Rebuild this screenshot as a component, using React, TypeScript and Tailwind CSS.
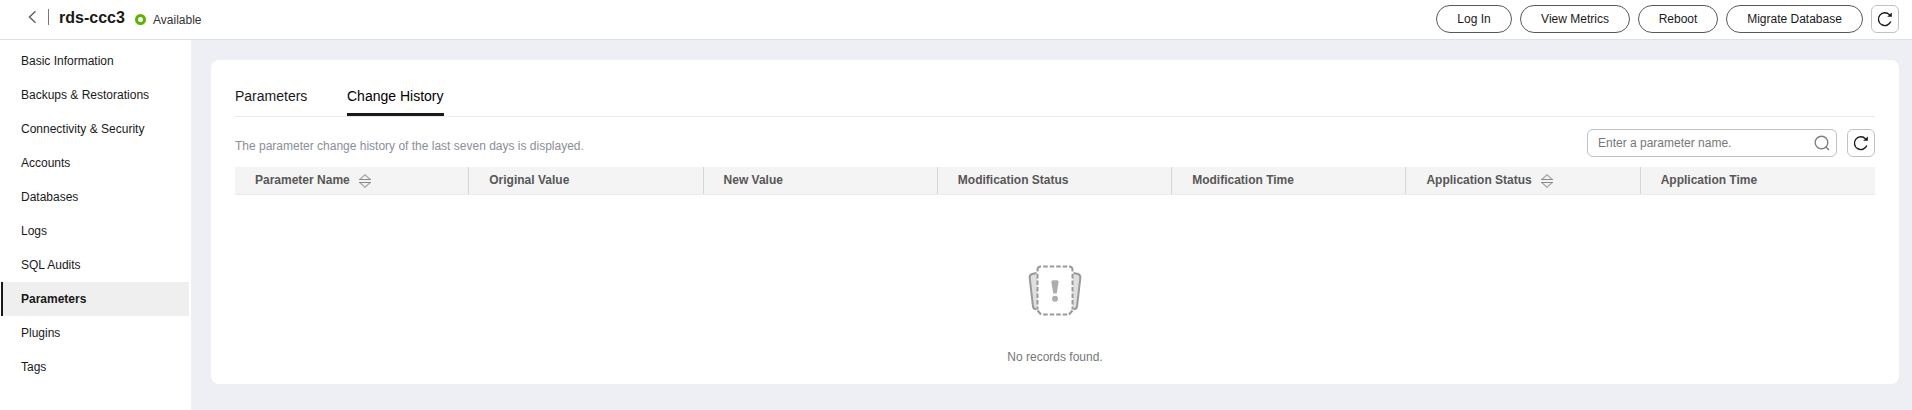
import type { ReactNode } from "react";

const navItems = [
  "Basic Information",
  "Backups & Restorations",
  "Connectivity & Security",
  "Accounts",
  "Databases",
  "Logs",
  "SQL Audits",
  "Parameters",
  "Plugins",
  "Tags",
];

const columns = [
  { label: "Parameter Name", sortable: true },
  { label: "Original Value" },
  { label: "New Value" },
  { label: "Modification Status" },
  { label: "Modification Time" },
  { label: "Application Status", sortable: true },
  { label: "Application Time" },
];

function RefreshIcon() {
  return (
    <svg width="16" height="16" viewBox="0 0 16 16" fill="none">
      <path d="M13.8 10.6A6.4 6.4 0 1 1 12.6 3.9" stroke="#191919" strokeWidth="1.4" />
      <path d="M14.8 1.400V5.800H10.200Z" fill="#191919" />
    </svg>
  );
}

function SortIcon() {
  return (
    <svg className="mt-px" width="12" height="14" viewBox="0 0 12 14" fill="none">
      <path d="M0.800 5.500L6 0.800L11.200 5.500" stroke="#adadad" strokeWidth="1.400" />
      <path d="M0.800 8.500L6 13.200L11.200 8.500" stroke="#adadad" strokeWidth="1.400" />
      <path d="M0 5.500H12M0 8.500H12" stroke="#8a8a8a" />
    </svg>
  );
}

function EmptyIcon() {
  return (
    <svg width="54" height="52" viewBox="0 0 54 52" fill="none">
      <path d="M10 8L4 9.500Q1.500 10.500 1.800 13L5 41Q5.500 43.800 8 43.800H10Z" fill="#dfdfdf" />
      <path d="M44 8L50 9.500Q52.500 10.500 52.200 13L49 41Q48.500 43.800 46 43.800H44Z" fill="#dfdfdf" />
      <path d="M8.500 8L4 9Q1.400 9.800 1.700 12.800L5 41.500Q5.500 44.200 8.500 44.200" stroke="#999" strokeWidth="2" />
      <path d="M45.500 8L50 9Q52.600 9.800 52.300 12.800L49 41.500Q48.500 44.200 45.500 44.200" stroke="#999" strokeWidth="2" />
      <path d="M13 1.500H41L44.500 5V45L41 49.500H13L9.500 45V5Z" fill="white" />
      <path d="M9.500 6.500V4.500Q9.700 1.500 13 1.500M41 1.500Q44.300 1.500 44.500 4.500V6.500M9.500 45.500L13 49.500M44.500 45.500L41 49.500" stroke="#999" strokeWidth="2" />
      <path d="M15.200 1.500H39.500M15.200 49.500H39.500" stroke="#999" strokeWidth="2" strokeDasharray="4.500 2" />
      <path d="M9.500 9V44.500M44.500 9V44.500" stroke="#999" strokeWidth="2" strokeDasharray="4.500 2" />
      <path d="M23.300 17Q23.300 15.300 25 15.300H29Q30.700 15.300 30.600 17L28.700 28.500H25.300Z" fill="#adadad" />
      <circle cx="27" cy="33.700" r="3" fill="#adadad" />
    </svg>
  );
}

function PillButton({ children, width }: { children: ReactNode; width: string }) {
  return (
    <button className={`h-7 rounded-full border border-[#595959] pb-px text-[#191919] ${width}`}>
      {children}
    </button>
  );
}

function RefreshButton() {
  return (
    <button aria-label="Refresh" className="flex size-7 shrink-0 items-center justify-center rounded-md border border-[#c2c2c2]">
      <RefreshIcon />
    </button>
  );
}

export default function App() {
  return (
    <div className="flex h-[410px] w-[1912px] flex-col overflow-hidden bg-white font-['Liberation_Sans',Arial,sans-serif] text-xs text-[#191919]">
      <header className="flex h-10 shrink-0 items-start justify-between border-b border-[#dfe1e6] pr-[13px]">
        <div className="flex items-start pl-7">
          <svg className="mt-[10px]" width="9" height="14" viewBox="0 0 9 14" fill="none" stroke="#575d6c" strokeWidth="1.400">
            <path d="M7.500 1.300L1.500 7L7.500 12.700" />
          </svg>
          <span className="mt-[9px] ml-[11px] h-4 w-px bg-[#777]" />
          <h1 className="mt-2 ml-[10px] w-[66px] text-base leading-5 font-bold whitespace-nowrap">rds-ccc3</h1>
          <span className="mt-[14px] ml-[10px] size-[11px] rounded-full border-[3px] border-[#5cb300]" />
          <span className="mt-[11px] ml-[7px] leading-[18px] text-[#333]">Available</span>
        </div>
        <div className="flex gap-2 pt-[5px]">
          <PillButton width="w-[76px]">Log In</PillButton>
          <PillButton width="w-[110px]">View Metrics</PillButton>
          <PillButton width="w-20">Reboot</PillButton>
          <PillButton width="w-[137px]">Migrate Database</PillButton>
          <RefreshButton />
        </div>
      </header>

      <div className="flex min-h-0 flex-1">
        <nav className="w-[191px] shrink-0 pt-1 pr-[2px] pl-px">
          {navItems.map((item) => (
            <a
              key={item}
              className={
                item === "Parameters"
                  ? "flex h-[34px] items-center border-l-2 border-[#191919] bg-[#efefef] pl-[18px] font-bold"
                  : "flex h-[34px] items-center border-l-2 border-transparent pl-[18px]"
              }
            >
              {item}
            </a>
          ))}
        </nav>

        <main className="flex-1 bg-[#eeeff5] pt-5 pr-[13px] pl-5">
          <section className="h-[324px] rounded-lg bg-white px-6 pt-6">
            <div className="flex h-[33px] gap-10 border-b border-[#ebebeb] text-sm">
              <div className="h-8 w-[72px] pt-0.5">Parameters</div>
              <div className="h-8 w-[97px] border-b-3 border-[#191919] pt-0.5 whitespace-nowrap text-black">Change History</div>
            </div>

            <div className="flex h-[50px] items-start justify-between pt-3">
              <p className="pt-[9px] text-[#8a8e99]">The parameter change history of the last seven days is displayed.</p>
              <div className="flex gap-[10px]">
                <div className="flex h-7 w-[250px] items-center justify-between rounded-md border border-[#c2c2c2] pr-[6px] pl-[10px]">
                  <span className="pb-px text-[#777]">Enter a parameter name.</span>
                  <svg width="16" height="16" viewBox="0 0 16 16" fill="none" stroke="#808080" strokeWidth="1.400">
                    <circle cx="7.500" cy="7.500" r="6.300" />
                    <path d="M11.500 11.500L15 15" />
                  </svg>
                </div>
                <RefreshButton />
              </div>
            </div>

            <div className="grid h-7 grid-cols-7 border-b border-[#ebebeb] bg-[#f4f4f4] font-bold text-[#575757]">
              {columns.map((column, index) => (
                <div
                  key={column.label}
                  className={
                    index < columns.length - 1
                      ? "flex items-center gap-[9px] border-r border-[#d6d6d6] pb-px pl-5"
                      : "flex items-center pb-px pl-5"
                  }
                >
                  {column.label}
                  {column.sortable && <SortIcon />}
                </div>
              ))}
            </div>

            <div className="flex flex-col items-center pt-[70px]">
              <EmptyIcon />
              <p className="mt-8 text-[#777]">No records found.</p>
            </div>
          </section>
        </main>
      </div>
    </div>
  );
}
